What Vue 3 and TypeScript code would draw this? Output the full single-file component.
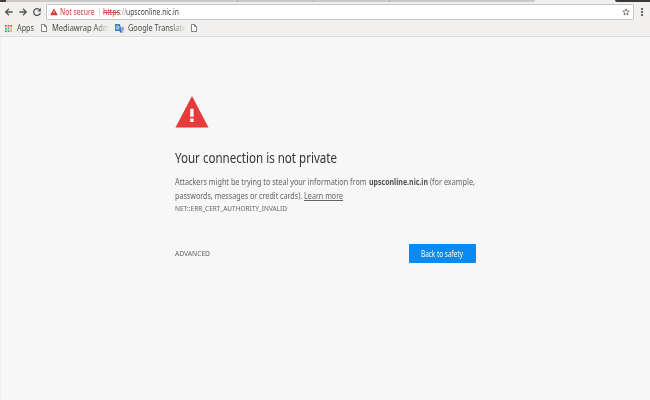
<script setup lang="ts">
import type { Directive } from 'vue'

// Condenses a text run to the given width while keeping it in the flow.
const vFit: Directive<HTMLElement, number> = {
  mounted(el, { value }) {
    const natural = el.getBoundingClientRect().width
    el.style.transform = `scaleX(${value / natural})`
    el.style.marginRight = `${value - natural}px`
  },
}
</script>

<template>
  <div class="browser">
    <div class="tabs"><i class="corner"></i><i class="tab"></i><i class="tab"></i><i class="tab"></i><i class="tab last"></i><i class="active"></i><i class="frame"></i></div>
    <div class="toolbar">
      <svg class="nav" viewBox="0 0 10 10"><path d="M8.8 5H1.8M5 1.7 1.7 5 5 8.3" /></svg>
      <svg class="nav" viewBox="0 0 10 10"><path d="M1.2 5h7M5 1.7 8.3 5 5 8.3" /></svg>
      <svg class="nav" viewBox="0 0 10 10"><path d="M7.8 3A3.4 3.4 0 1 0 8.4 5.9" /><path class="solid" d="M8.9 1v3.5H5.4z" /></svg>
      <div class="address">
        <svg class="small-warn" viewBox="0 0 8 8"><path d="M4 .4 7.8 7.3H.2z" fill="#c9302c" /><path d="M4 2.8v2.1M4 5.6v.8" stroke="#fff" stroke-width=".8" /></svg>
        <span v-fit="34.5" class="fit insecure">Not secure</span>
        <i class="divider"></i>
        <span class="url"><span v-fit="17" class="fit scheme">https</span><span v-fit="6.5" class="fit slashes">://</span><span v-fit="53" class="fit">upsconline.nic.in</span></span>
        <svg class="star" viewBox="0 0 8 8"><path d="M4 .8 4.9 3l2.3.2-1.8 1.5.6 2.3L4 5.8 2 7l.6-2.3L.8 3.2 3.1 3z" /></svg>
      </div>
      <div class="menu"><i></i><i></i><i></i></div>
    </div>
    <div class="bookmarks">
      <svg class="apps" viewBox="0 0 8 8">
        <path d="M0 0h2v2H0zM3 0h2v2H3z" fill="#df5148" /><path d="M6 0h2v2H6z" fill="#df5148" />
        <path d="M0 3h2v2H0z" fill="#35a66b" /><path d="M3 3h2v2H3z" fill="#5586dd" /><path d="M6 3h2v2H6z" fill="#e9b53a" />
        <path d="M0 6h2v2H0zM3 6h2v2H3z" fill="#35a66b" /><path d="M6 6h2v2H6z" fill="#e9b53a" />
      </svg>
      <span v-fit="17" class="fit">Apps</span>
      <svg class="page" viewBox="0 0 6 8"><path d="M.5.5h3l2 2v5h-5zM3.5.5v2h2" /></svg>
      <span class="clip media"><span v-fit="58" class="fit">Mediawrap Adm</span></span>
      <svg class="translate" viewBox="0 0 9 9"><path d="M3.5 2.5H9V9H5z" fill="#b9c7d8" /><path d="M0 0h4.8l2 7H0z" fill="#3b7fdd" /><path d="M3.9 2.7A1.5 1.5 0 1 0 4 4.3V3.6H2.7" fill="none" stroke="#fff" stroke-width=".7" /><path d="m4.7 7 1.8 0-1.2 2z" fill="#2459af" /><path d="M6.8 4.4h1.8M7.7 3.8v.6M8.2 4.4c-.2 1-.7 1.6-1.3 2" stroke="#66788b" stroke-width=".5" fill="none" /></svg>
      <span class="clip google"><span v-fit="58" class="fit">Google Translate</span></span>
      <svg class="page lone" viewBox="0 0 6 8"><path d="M.5.5h3l2 2v5h-5zM3.5.5v2h2" /></svg>
    </div>
    <main class="page-body">
      <section class="interstitial">
        <svg class="warning" viewBox="0 0 34 32"><path d="M17 0 33.5 31.5H.5z" fill="#e53c39" /><path d="M15.2 12.7h3.4v8h-3.4zM15.2 22.5h3.4v3.5h-3.4z" fill="#fff" /></svg>
        <h1><span v-fit="162" class="fit">Your connection is not private</span></h1>
        <p><span v-fit="193.5" class="fit lead">Attackers might be trying to steal your information from&nbsp;</span><b v-fit="59" class="fit">upsconline.nic.in</b><span v-fit="47" class="fit">&nbsp;(for example,</span></p>
        <p><span v-fit="168" class="fit">passwords, messages or credit cards). <a>Learn more</a></span></p>
        <p class="code"><span v-fit="112" class="fit">NET::ERR_CERT_AUTHORITY_INVALID</span></p>
        <div class="actions">
          <span v-fit="35" class="fit advanced">ADVANCED</span>
          <button><span v-fit="42" class="fit">Back to safety</span></button>
        </div>
      </section>
    </main>
  </div>
</template>

<style>
body { margin: 0; background: #f7f7f7; }
</style>

<style scoped>
.browser { width: 650px; height: 400px; overflow: hidden; display: flex; flex-direction: column; background: #f7f7f7; font-family: "Noto Sans", sans-serif; color: #444; }
.fit { display: inline-block; white-space: nowrap; transform-origin: left center; flex: none; }
.tabs { height: 2px; display: flex; flex: none; background: #f1f0ee; }
.corner { width: 6px; background: #44413d; }
.tab { width: 76px; box-sizing: border-box; background: #cbcac9; border-right: 1px solid #aaa; }
.tab:nth-child(2) { width: 232px; }
.tab:nth-child(3) { width: 76px; }
.tab:nth-child(4) { width: 76px; }
.tab.last { width: 145px; border-right: 0; border-bottom-right-radius: 2px; }
.active { width: 80px; }
.frame { flex: 1; background: #3b3835; border-bottom-left-radius: 2px; }
.toolbar { height: 18px; box-sizing: border-box; flex: none; display: flex; align-items: center; padding: 2px 0 0 4px; background: #f1f0ee; }
.nav { width: 10px; height: 10px; margin-right: 4px; fill: none; stroke: #555; stroke-width: 1.3; }
.nav .solid { fill: #555; stroke: none; }
.address { width: 588px; height: 16px; box-sizing: border-box; display: flex; align-items: center; padding: 0 3px; background: #fff; border: 1px solid #c8c7c5; border-radius: 1px; font-size: 8px; line-height: 12px; }
.small-warn { width: 8px; height: 8px; margin-right: 2px; }
.insecure { color: #c83f3b; }
.divider { height: 9px; border-left: 1px solid #ddd; margin: 0 3px 0 4px; }
.url { display: flex; color: #444; }
.scheme { color: #c9302c; background: linear-gradient(#c9302c, #c9302c) 0 6px / 100% 0.8px no-repeat; }
.slashes { color: #999; }
.star { width: 8px; height: 8px; margin-left: auto; fill: none; stroke: #666; stroke-width: .8; }
.menu { display: flex; flex-direction: column; gap: 1px; margin-left: 7px; }
.menu i { width: 2px; height: 2px; background: #666; }
.bookmarks { height: 17px; flex: none; display: flex; align-items: center; box-sizing: border-box; padding-left: 5px; background: #f1f0ee; border-bottom: 1px solid #dcdbda; font-size: 8.3px; line-height: 12px; color: #4b4b4b; }
.apps { width: 7px; height: 7px; margin-right: 5px; }
.page { width: 6px; height: 8px; margin: 0 5px 0 7px; fill: #fff; stroke: #666; stroke-width: .8; }
.clip { display: block; overflow: hidden; white-space: nowrap; height: 12px; }
.media { width: 57px; mask-image: linear-gradient(90deg, #000 75%, #0001); }
.google { width: 57px; mask-image: linear-gradient(90deg, #000 75%, #0001); }
.translate { width: 9px; height: 9px; margin: 0 4px 0 6px; }
.page.lone { margin-left: 6px; }
.page-body { flex: 1; border-top: 1px solid #fbfbfb; border-left: 1px solid #eee; }
.interstitial { width: 301px; margin: 58px 0 0 174px; }
.warning { display: block; width: 34px; height: 32px; }
h1 { margin: 20px 0 7px; height: 20px; font-size: 13.5px; line-height: 20px; font-weight: 400; color: #333; }
p { display: flex; margin: 0; height: 13.5px; font-size: 8.5px; line-height: 13.5px; color: #646464; }
p b { color: #505050; }
p a { text-decoration: underline; }
.code { font-size: 7.5px; }
.actions { display: flex; align-items: center; justify-content: space-between; margin-top: 28px; }
.advanced { font-size: 7.5px; color: #5c5c5c; }
button { width: 67px; height: 19px; padding: 0 0 0 12px; border: 0; border-radius: 1px; background: #078af3; color: #fff; font: 8px/19px "Noto Sans", sans-serif; text-align: left; }
</style>
